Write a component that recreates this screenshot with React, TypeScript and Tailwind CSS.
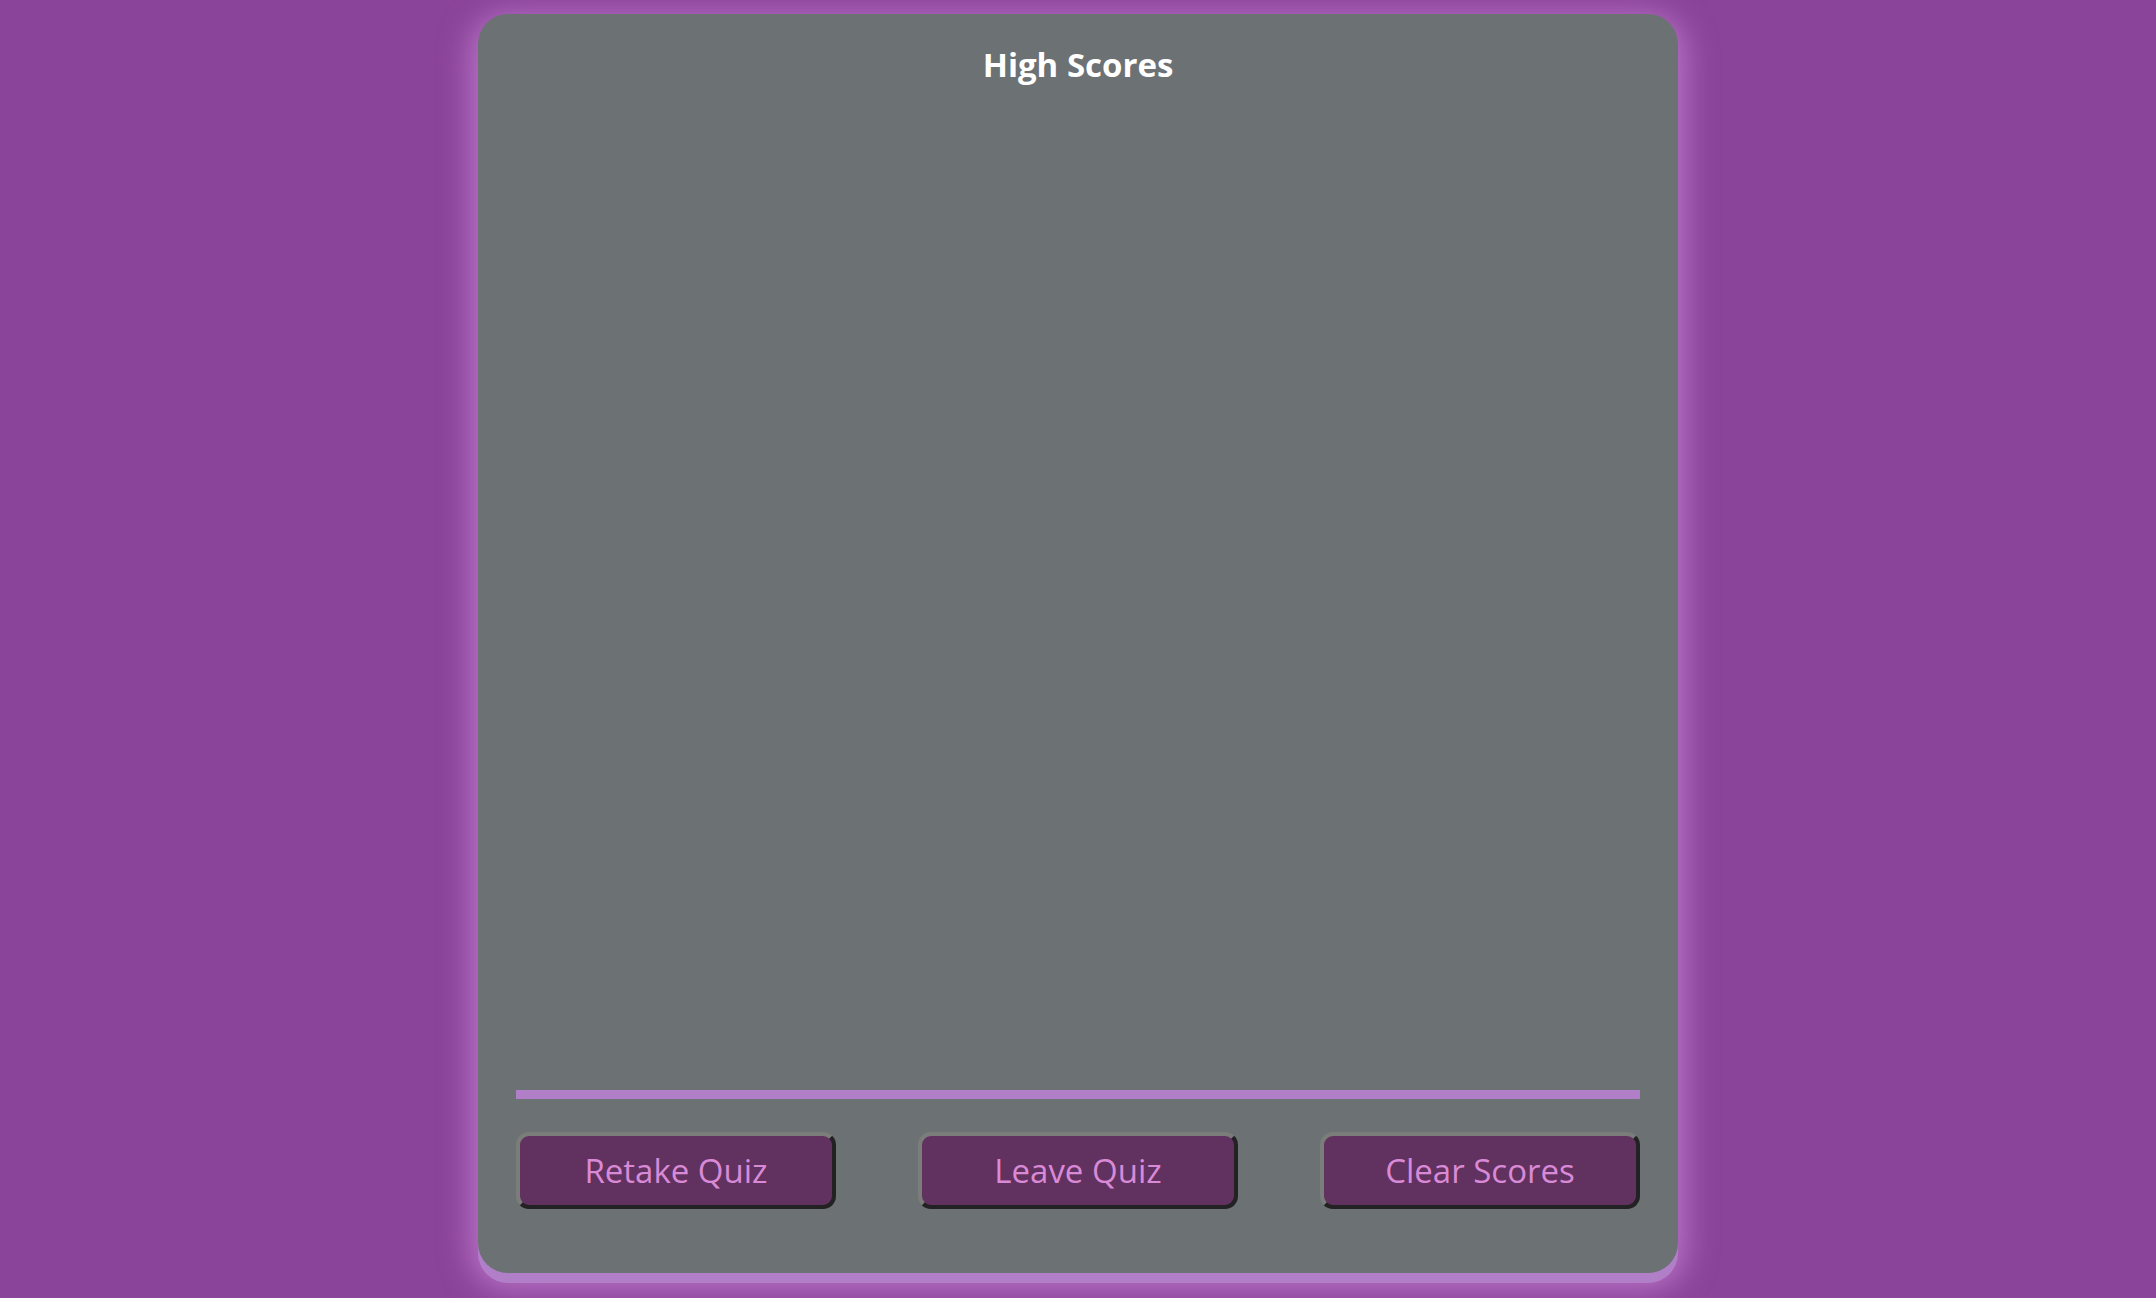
import React from 'react';

const buttons = ['Retake Quiz', 'Leave Quiz', 'Clear Scores'];

const App: React.FC = () => {
  return (
    <div className="min-h-screen w-full bg-[#8a4499] pt-[14px] font-['Open_Sans',sans-serif]">
      <div className="mx-auto flex h-[1259px] w-[1200px] flex-col rounded-[30px] bg-[#6c7173] px-[38px] pb-[64px] pt-[28px] shadow-[0_10px_0_#b07fc8,0_8px_30px_8px_#b872c6]">
        <h1 className="text-center text-[33px] font-bold leading-[46px] text-white">High Scores</h1>

        {/* scores list (empty) */}
        <div className="flex-1" />

        <div className="h-[9px] w-full bg-[#b07fc8]" />

        <div className="mt-[33px] flex justify-between">
          {buttons.map(label => (
            <button
              key={label}
              className="h-[77px] w-[320px] rounded-[13px] border-4 border-t-[#7b7d7a] border-l-[#7b7d7a] border-r-[#222222] border-b-[#222222] bg-[#61315f] text-[33px] text-[#d98ad6]"
            >
              {label}
            </button>
          ))}
        </div>
      </div>
    </div>
  );
};

export default App;
